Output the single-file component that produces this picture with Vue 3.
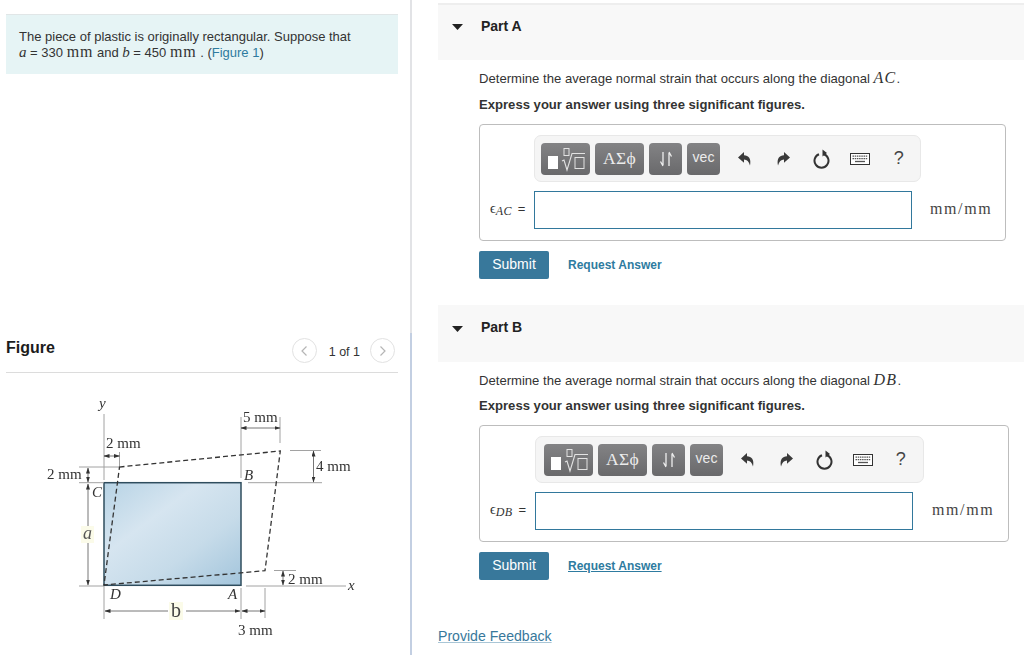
<script setup>
const parts = [
  { name: 'Part A', v: 'AC', cls: 'part-a', sub: 'AC' },
  { name: 'Part B', v: 'DB', cls: 'part-b', sub: 'DB' }
]
const thin = [
  [104, 414, 104, 480], [119.5, 452, 119.5, 467], [79, 467, 120, 467], [79, 482.7, 104, 482.7],
  [79, 586, 104, 586], [104, 586, 104, 619], [241, 588, 241, 619], [265, 588, 265, 618],
  [246, 586, 346, 586], [274, 570.5, 296, 570.5], [290, 450.5, 321, 450.5], [248, 482.7, 322, 482.7],
  [241, 417, 241, 478], [280, 417, 280, 443]
]
const dims = [
  [104, 456, 119.5, 456], [88, 468, 88, 482], [242, 611, 265, 611],
  [283, 571, 283, 585], [313.5, 451, 313.5, 482], [241, 428, 280, 428]
]
const dimsOuterStart = [[88, 484, 88, 526], [105, 611, 168, 611]]
const dimsOuterEnd = [[88, 543, 88, 585], [186, 611, 240, 611]]
</script>

<template>
  <div class="page">
    <section class="left">
      <div class="intro">
        <p>The piece of plastic is originally rectangular. Suppose that<br><i class="m">a</i> = 330 <span class="m-up">mm</span> and <i class="m">b</i> = 450 <span class="m-up">mm</span> . (<a class="fig-link">Figure 1</a>)</p>
      </div>
      <div class="fig-head">
        <h2>Figure</h2>
        <div class="pager">
          <span class="circle"><svg width="8" height="12" viewBox="0 0 8 12"><path d="M6.500 1.500 2 6l4.500 4.500" fill="none" stroke="#b5b5b5" stroke-width="1.200"/></svg></span>
          <span class="count">1 of 1</span>
          <span class="circle"><svg width="8" height="12" viewBox="0 0 8 12"><path d="M1.500 1.500 6 6l-4.500 4.500" fill="none" stroke="#b5b5b5" stroke-width="1.200"/></svg></span>
        </div>
      </div>
      <svg class="diagram" width="404" height="267" viewBox="0 388 404 267">
        <defs>
          <linearGradient id="plate" x1="0" y1="0" x2="1" y2="1">
            <stop offset="0" stop-color="#b7d3e5"/>
            <stop offset=".35" stop-color="#d6e5f0"/>
            <stop offset=".65" stop-color="#c6dbe9"/>
            <stop offset="1" stop-color="#a3c5dc"/>
          </linearGradient>
          <marker id="tip" markerWidth="6" markerHeight="4" refX="5.500" refY="2" orient="auto-start-reverse" markerUnits="userSpaceOnUse">
            <path d="M0 0 6 2 0 4z" fill="#333"/>
          </marker>
        </defs>
        <rect x="104" y="482.700" width="137" height="102.600" fill="url(#plate)" stroke="#2f4d5e" stroke-width="1.500"/>
        <line v-for="(l, i) in thin" :key="'t' + i" :x1="l[0]" :y1="l[1]" :x2="l[2]" :y2="l[3]" stroke="#a2a2a2" stroke-width="1"/>
        <line v-for="(l, i) in dims" :key="'d' + i" :x1="l[0]" :y1="l[1]" :x2="l[2]" :y2="l[3]" stroke="#666" stroke-width=".9" marker-start="url(#tip)" marker-end="url(#tip)"/>
        <line v-for="(l, i) in dimsOuterStart" :key="'s' + i" :x1="l[0]" :y1="l[1]" :x2="l[2]" :y2="l[3]" stroke="#666" stroke-width=".9" marker-start="url(#tip)"/>
        <line v-for="(l, i) in dimsOuterEnd" :key="'e' + i" :x1="l[0]" :y1="l[1]" :x2="l[2]" :y2="l[3]" stroke="#666" stroke-width=".9" marker-end="url(#tip)"/>
        <path d="M119.500 467 280.300 451 265 570.700 104 585Z" fill="none" stroke="#333" stroke-width="1.300" stroke-dasharray="5 3"/>
        <rect x="81" y="526" width="13" height="17" fill="#fbfbe9"/>
        <rect x="169" y="602" width="14" height="18" fill="#fbfbe9"/>
        <g class="lbl">
          <text x="106" y="448">2 mm</text>
          <text x="47" y="479">2 mm</text>
          <text x="243" y="422">5 mm</text>
          <text x="316" y="471">4 mm</text>
          <text x="288" y="583.500">2 mm</text>
          <text x="238" y="635">3 mm</text>
          <text class="b" x="171" y="617">b</text>
        </g>
        <g class="lbl it">
          <text x="99" y="408">y</text>
          <text x="92" y="497">C</text>
          <text x="244" y="480">B</text>
          <text x="110" y="599">D</text>
          <text x="228" y="599">A</text>
          <text class="a" x="83" y="539">a</text>
          <text x="348" y="590">x</text>
        </g>
      </svg>
    </section>

    <div class="divider"></div>

    <section class="right">
      <article v-for="p in parts" :key="p.name" class="part" :class="p.cls">
        <header class="part-head">
          <svg class="caret" width="11" height="6" viewBox="0 0 11 6"><path d="M0 0h11L5.500 6z" fill="#222"/></svg>
          <h3>{{ p.name }}</h3>
        </header>
        <p class="q">Determine the average normal strain that occurs along the diagonal <i class="m big">{{ p.v }}</i>.</p>
        <p class="hint">Express your answer using three significant figures.</p>
        <div class="box">
          <div class="toolbar">
            <span class="tb b-wide">
              <svg width="45" height="26" viewBox="0 0 45 26">
                <rect x="5" y="10" width="10" height="13" fill="#fff"/>
                <rect x="21" y="2.500" width="5" height="7" fill="none" stroke="#e2e2e2"/>
                <path d="M19 15l2-1 3 10 5-16.500h13" fill="none" stroke="#e2e2e2" stroke-width="1.100"/>
                <rect x="32" y="11.500" width="9" height="11" fill="none" stroke="#e2e2e2"/>
              </svg>
            </span>
            <span class="tb b-wide greek">ΑΣϕ</span>
            <span class="tb b-narrow">
              <svg width="16" height="18" viewBox="0 0 16 18"><path d="M5 2v13M5 16 2.500 11.500M11 16V3M11 2l2.500 4.500" fill="none" stroke="#eee" stroke-width="1.300"/></svg>
            </span>
            <span class="tb b-narrow vec">vec</span>
            <span class="ic first"><svg width="16" height="16" viewBox="0 0 16 16"><path d="M1 6.500 7 1v3.200c4.500 0 7.500 3.500 6 10.300-1-4-3-6-6-6v3.200z" fill="#3a3a3a"/></svg></span>
            <span class="ic"><svg width="16" height="16" viewBox="0 0 16 16"><path d="M15 6.500 9 1v3.200c-4.500 0-7.500 3.500-6 10.300 1-4 3-6 6-6v3.200z" fill="#3a3a3a"/></svg></span>
            <span class="ic"><svg width="18" height="20" viewBox="0 0 18 20"><path d="M6 5.200a7 7 0 1 0 5 0" fill="none" stroke="#333" stroke-width="2"/><path d="M8 0v7l4.500-3.500z" fill="#333" transform="translate(1.500 .5)"/></svg></span>
            <span class="ic"><svg width="20" height="12" viewBox="0 0 20 12"><rect x=".5" y=".5" width="19" height="11" fill="#fff" stroke="#333"/><path d="M2.500 3.200h15M2.500 5.700h15" stroke="#555" stroke-width="1.300" stroke-dasharray="1.500 .7"/><path d="M5 8.500h10" stroke="#555" stroke-width="1.300"/></svg></span>
            <span class="ic qm">?</span>
          </div>
          <label class="eq"><span class="eps">ϵ</span><i class="sub">{{ p.sub }}</i><span class="eqs">=</span></label>
          <input class="answer" type="text" aria-label="answer">
          <span class="unit">mm/mm</span>
        </div>
        <div class="actions">
          <button class="submit" type="button">Submit</button>
          <a class="req">Request Answer</a>
        </div>
      </article>
      <a class="feedback">Provide Feedback</a>
    </section>
  </div>
</template>

<style>
html, body { margin: 0; background: #fff; }
</style>

<style scoped>
.page {
  display: flex;
  height: 655px;
  width: 1024px;
  overflow: hidden;
  font-family: "Liberation Sans", Arial, sans-serif;
  color: #2b2b2b;
  background: #fff;
}
.left {
  width: 410px;
  box-sizing: border-box;
  padding: 14px 12px 0 6px;
  flex: none;
}
.intro {
  background: #e6f4f5;
  border-top: 1px solid #e1e6e7;
  height: 60px;
  box-sizing: border-box;
  padding: 14px 13px 0;
}
.intro p {
  margin: 0;
  font-size: 13px;
  line-height: 16px;
  color: #333;
}
.m { font-family: "Liberation Serif", serif; font-style: italic; font-size: 15px; line-height: 0; }
.m-up { font-family: "Liberation Serif", serif; font-size: 16px; letter-spacing: .9px; line-height: 0; }
.fig-link { color: #2e7ba0; }
.fig-head {
  margin-top: 258px;
  height: 41px;
  box-sizing: border-box;
  border-bottom: 1px solid #dcdcdc;
  display: flex;
  justify-content: space-between;
  align-items: flex-start;
}
.fig-head h2 {
  margin: 7px 0 0;
  font-size: 16px;
  line-height: 18px;
  color: #1c1c1c;
}
.pager { display: flex; align-items: center; margin: 6px 3px 0 0; }
.circle {
  width: 25px;
  height: 25px;
  border: 1px solid #e2e2e2;
  border-radius: 50%;
  box-sizing: border-box;
  display: flex;
  align-items: center;
  justify-content: center;
}
.count { font-size: 12.500px; margin: 2px 10px 0 12px; color: #333; }
.diagram { display: block; margin: 15px 0 0 -6px; filter: blur(.3px); }
.lbl text { font-family: "Liberation Serif", serif; font-size: 15px; fill: #333; }
.lbl.it text { font-style: italic; }
.lbl text.a { font-size: 18px; fill: #555; }
.lbl text.b { font-family: "Liberation Serif", serif; font-size: 20px; fill: #444; }

.divider {
  width: 2px;
  flex: none;
  background: linear-gradient(#e2e3e6 333px, #c3cfe2 333px);
}
.right {
  flex: 1;
  min-width: 0;
  padding: 3px 0 0 26px;
}
.part-head {
  height: 57px;
  box-sizing: border-box;
  background: #f8f8f8;
  border-top: 2px solid #eeeeee;
  display: flex;
  align-items: flex-start;
  padding: 19px 0 0 14px;
}
.part-b .part-head { border-top-color: #f8f8f8; }
.caret { flex: none; }
.part-head h3 {
  margin: -7px 0 0 18px;
  font-size: 14px;
  line-height: 18px;
  color: #222;
}
.part-b .part-head h3 { margin-top: -8px; }
.q, .hint {
  margin: 9px 0 0 41px;
  font-size: 13.100px;
  line-height: 20px;
  color: #333;
}
.hint { margin-top: 6px; font-weight: 700; }
.part-b .hint { margin-top: 5px; }
.m.big { font-size: 16px; letter-spacing: 1.300px; }
.box {
  margin: 9px 0 0 41px;
  width: 527px;
  height: 117px;
  box-sizing: border-box;
  border: 1px solid #bdbdbd;
  border-radius: 4px;
  display: grid;
  grid-template-columns: 54px 378px 1fr;
  grid-template-rows: 47px 38px;
  row-gap: 9px;
  padding-top: 10px;
  align-items: center;
}
.part-b .box { width: 530px; grid-template-columns: 55px 378px 1fr; }
.toolbar {
  grid-column: 2 / 4;
  grid-row: 1;
  width: 387px;
  height: 47px;
  box-sizing: border-box;
  background: #f5f5f5;
  border: 1px solid #e8e8e8;
  border-radius: 7px;
  display: flex;
  align-items: center;
  gap: 5px;
  padding: 0 0 0 6px;
}
.part-b .toolbar { width: 389px; padding-left: 8px; }
.part-b .qm { margin-left: -6px; }
.tb {
  height: 32px;
  border-radius: 4px;
  background: linear-gradient(#838385, #69696b);
  display: flex;
  align-items: center;
  justify-content: center;
  color: #ececec;
  flex: none;
}
.b-wide { width: 49px; }
.b-narrow { width: 33px; }
.greek { font-family: "Liberation Serif", serif; font-size: 17.500px; letter-spacing: .3px; }
.vec { font-size: 14px; padding-bottom: 3px; box-sizing: border-box; height: 32px; }
.ic {
  width: 38.500px;
  margin-left: -5px;
  height: 24px;
  display: flex;
  align-items: center;
  justify-content: center;
  flex: none;
}
.ic.first { margin-left: .5px; }
.qm { font-size: 18px; color: #444; }
.eq {
  grid-row: 2;
  grid-column: 1;
  font-family: "Liberation Serif", serif;
  font-size: 14px;
  color: #333;
  padding-left: 10px;
  margin-top: -2px;
  white-space: nowrap;
}
.sub { font-size: 12px; position: relative; top: 2px; letter-spacing: .4px; }
.eqs { font-family: "Liberation Sans", sans-serif; font-size: 13px; margin-left: 6px; }
.answer {
  grid-row: 2;
  grid-column: 2;
  width: 378px;
  height: 38px;
  box-sizing: border-box;
  border: 1px solid #32789c;
  background: #fff;
  padding: 0;
  margin: 0;
  outline: none;
}
.unit {
  grid-row: 2;
  grid-column: 3;
  font-family: "Liberation Serif", serif;
  font-size: 16px;
  letter-spacing: 1.600px;
  color: #444;
  padding-left: 18px;
  margin-top: -2px;
  white-space: nowrap;
}
.part-b .unit { padding-left: 19px; }
.actions {
  margin: 10px 0 0 41px;
  display: flex;
  align-items: center;
}
.submit {
  width: 70px;
  height: 28px;
  border: 0;
  border-radius: 2px;
  background: #38789b;
  color: #fff;
  font: 14px "Liberation Sans", Arial, sans-serif;
  padding: 0 0 2px;
}
.req {
  margin-left: 19px;
  font-size: 12px;
  font-weight: 700;
  color: #2e7ba0;
}
.part-b .req { text-decoration: underline; }
.part-b { margin-top: 26px; }
.feedback {
  display: block;
  margin-top: 47px;
  font-size: 14.100px;
  line-height: 18px;
  color: #38789b;
  text-decoration: underline;
  text-decoration-color: #a9c6d6;
}
</style>
